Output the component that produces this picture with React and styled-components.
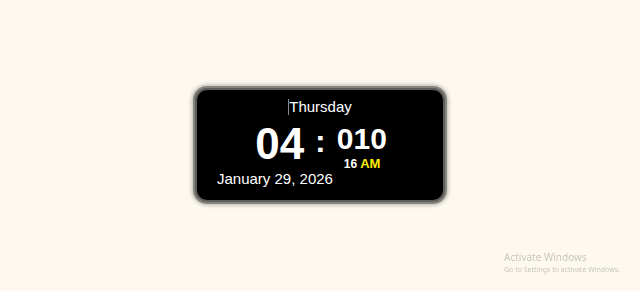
import React from 'react';
import styled, { createGlobalStyle } from 'styled-components';

const GlobalStyle = createGlobalStyle`
  html, body {
    margin: 0;
    padding: 0;
    height: 100%;
    background: #fdf9f1;
    font-family: "Liberation Sans", Arial, sans-serif;
  }
  #root {
    height: 100%;
  }
`;

const Page = styled.div`
  height: 100%;
  display: flex;
  align-items: center;
  justify-content: center;
`;

const Card = styled.div`
  width: 246px;
  height: 110px;
  box-sizing: border-box;
  margin-top: -1px;
  background: #000;
  border-radius: 10px;
  box-shadow: 0 0 0 2px #5e5e5a, 0 0 0 4px #85847e, 0 0 4px 5px #b3b1a9;
  padding: 8px 20px 0;
  display: flex;
  flex-direction: column;
  color: #fff;
`;

const Day = styled.div`
  font-size: 15px;
  line-height: 17px;
  text-align: center;
`;

const Caret = styled.span`
  display: inline-block;
  width: 1px;
  height: 16px;
  background: #8a8a8a;
  vertical-align: -3px;
`;

const TimeRow = styled.div`
  display: flex;
  justify-content: center;
  align-items: flex-start;
  margin-top: 7px;
  margin-left: 2px;
`;

const Hours = styled.div`
  font-size: 44px;
  line-height: 44px;
  font-weight: bold;
`;

const Colon = styled.div`
  font-size: 32px;
  line-height: 32px;
  font-weight: bold;
  margin: 3px 11px 0 11px;
`;

const Right = styled.div`
  display: flex;
  flex-direction: column;
  align-items: flex-start;
`;

const Minutes = styled.div`
  font-size: 30px;
  line-height: 30px;
  font-weight: bold;
  margin-top: 2px;
`;

const Seconds = styled.div`
  font-size: 12px;
  line-height: 14px;
  font-weight: bold;
  margin-top: 3px;
  margin-left: 7px;
`;

const Meridiem = styled.span`
  color: #ffee00;
  font-size: 13px;
  margin-left: 3px;
`;

const DateLine = styled.div`
  font-size: 15px;
  line-height: 17px;
  margin-top: -1px;
`;

const Watermark = styled.div`
  position: fixed;
  left: 504px;
  top: 250px;
  color: #c9c6bf;
  font-family: "Noto Sans", "Liberation Sans", sans-serif;
`;

const WmTitle = styled.div`
  font-size: 10px;
  line-height: 14px;
`;

const WmSub = styled.div`
  font-size: 7px;
  line-height: 11px;
`;

export default function App() {
  return (
    <>
      <GlobalStyle />
      <Page>
        <Card>
          <Day><Caret />Thursday</Day>
          <TimeRow>
            <Hours>04</Hours>
            <Colon>:</Colon>
            <Right>
              <Minutes>010</Minutes>
              <Seconds>16<Meridiem>AM</Meridiem></Seconds>
            </Right>
          </TimeRow>
          <DateLine>January 29, 2026</DateLine>
        </Card>
      </Page>
      <Watermark>
        <WmTitle>Activate Windows</WmTitle>
        <WmSub>Go to Settings to activate Windows.</WmSub>
      </Watermark>
    </>
  );
}
